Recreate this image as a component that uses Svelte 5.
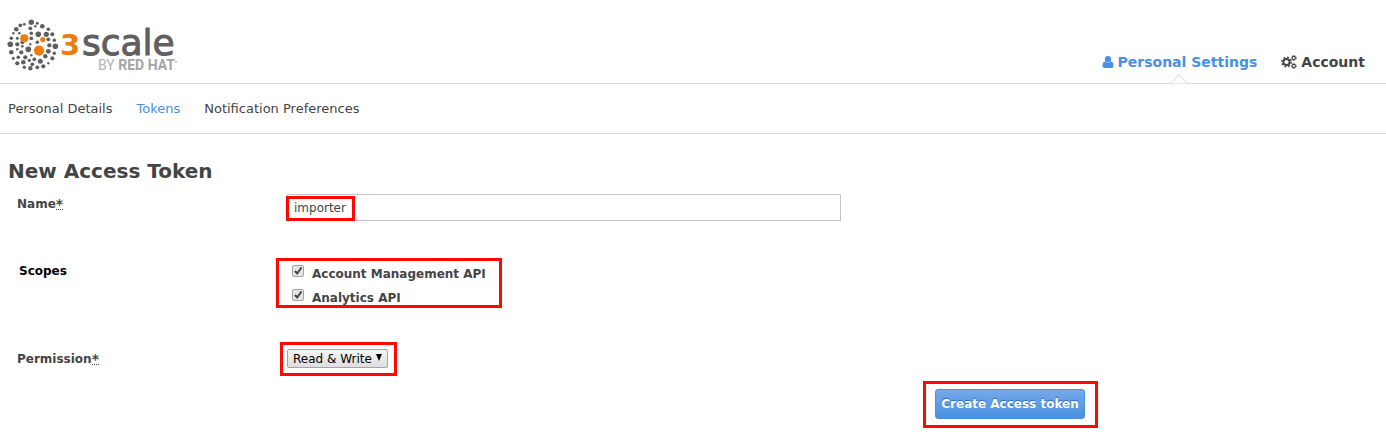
<script>
  const dots = [
    [31, 22, 2.7], [24, 24, 1.4], [37, 23, 1.5], [20, 25, 1.9], [42, 26, 2.3], [16, 29, 2.3], [30, 28, 1.9],
    [35, 26, 1.3], [48, 29, 1.8], [13, 33, 1.2], [19, 33, 1.3], [38, 34, 2.8], [46, 34, 2.6], [52, 34, 2],
    [31, 33, 1.8], [11, 38, 1.8], [17, 38, 1.5], [31, 38, 1.9], [54, 40, 1.7], [48, 39, 1.9], [10, 44, 2.8],
    [17, 44, 2.1], [22, 42, 1.9], [37, 42, 1.8], [30, 44, 1.2], [49, 45, 2.1], [55, 46, 2.8], [11, 52, 2.3],
    [22, 46, 1.4], [28, 49, 2.9], [17, 49, 1.3], [48, 51, 2.4], [54, 53, 1.7], [21, 52, 2.1], [31, 55, 1.2],
    [13, 58, 1.5], [18, 57, 1.8], [25, 57, 2.1], [34, 59, 1.9], [45, 56, 2.2], [52, 58, 2.1], [17, 63, 2.1],
    [23, 62, 2.3], [29, 60, 1.6], [32, 64, 1.9], [40, 61, 2.5], [48, 63, 1.2], [24, 67, 1.7], [30, 68, 2.2],
    [37, 67, 1.9], [43, 66, 2.1]
  ];
  const accents = [[24, 38, 4.1], [42.5, 39.3, 2.6], [38.7, 50.3, 5.1]];
  const sections = ['Personal Details', 'Tokens', 'Notification Preferences'];
  let name = $state('importer');
  let account = $state(true);
  let analytics = $state(true);
</script>

<header>
  <a class="brand" href="#home" aria-label="3scale by Red Hat">
    <svg width="184" height="74" viewBox="0 0 184 74">
      {#each dots as [x, y, r]}<circle cx={x + 0.3} cy={y + 0.3} {r} fill="#5f5f60" />{/each}
      {#each accents as [x, y, r]}<circle cx={x + 0.3} cy={y + 0.3} {r} fill="#ed7d0c" />{/each}
      <text class="three" x="60" y="55">3</text>
      <text class="scale" x="82" y="55">scale</text>
      <text class="by" x="98" y="70">BY <tspan>RED HAT</tspan></text>
      <circle cx="176" cy="62" r="1" fill="#bbb" />
    </svg>
  </a>
  <nav class="main" aria-label="Main">
    <a class="active" href="#personal">
      <svg width="12" height="14" viewBox="0 0 12 14"><path fill="currentColor" d="M6 1a3.2 3.2 0 1 1 0 6.4A3.2 3.2 0 0 1 6 1M3 6.6C4.700 8.400 7.300 8.400 9 6.600C11 6.800 11.500 9 11.500 11C11.500 12.300 10.700 13 9.600 13H2.400C1.300 13 .500 12.300 .500 11C.500 9 1 6.800 3 6.600Z" /></svg>
      Personal Settings
      <svg class="notch" width="18" height="10" viewBox="0 0 18 10"><path d="M0.500 9.500L9 1L17.500 9.500" fill="#fff" stroke="#d9d9d9" /></svg>
    </a>
    <a href="#account">
      <svg width="16" height="14" viewBox="0 0 16 14" fill="none" stroke="currentColor">
        <circle cx="5.500" cy="7" r="3.100" stroke-width="2" />
        <circle cx="5.500" cy="7" r="4.700" stroke-width="1.500" stroke-dasharray="1.850 1.840" />
        <circle cx="12.800" cy="3" r="1.600" stroke-width="1.100" />
        <circle cx="12.800" cy="3" r="2.500" stroke-dasharray="1 .960" />
        <circle cx="12.800" cy="11" r="1.600" stroke-width="1.100" />
        <circle cx="12.800" cy="11" r="2.500" stroke-dasharray="1 .960" />
      </svg>
      Account
    </a>
  </nav>
</header>

<nav class="sub" aria-label="Personal settings">
  {#each sections as section}
    <a class:active={section === 'Tokens'} href="#{section}">{section}</a>
  {/each}
</nav>

<main>
  <h1>New Access Token</h1>
  <form onsubmit={(e) => e.preventDefault()}>
    <div class="row name">
      <label for="name">Name<abbr title="required">*</abbr></label>
      <div class="field">
        <input id="name" type="text" bind:value={name} />
        <span class="mark"></span>
      </div>
    </div>
    <div class="row scopes" role="group" aria-labelledby="scopes">
      <span class="legend" id="scopes">Scopes</span>
      <div class="outline checks">
        <label><input type="checkbox" bind:checked={account} />Account Management API</label>
        <label><input type="checkbox" bind:checked={analytics} />Analytics API</label>
      </div>
    </div>
    <div class="row permission">
      <label for="permission">Permission<abbr title="required">*</abbr></label>
      <div class="outline choice">
        <select id="permission"><option>Read &amp; Write</option></select>
        <svg width="6" height="7" viewBox="0 0 6 7"><path d="M0 0H6L3 7Z" /></svg>
      </div>
    </div>
    <div class="actions">
      <div class="outline submit"><button type="submit">Create Access token</button></div>
    </div>
  </form>
</main>

<style>
  :global(body) {
    background: #fff;
    color: #444;
    font: 12px/20px "DejaVu Sans", Verdana, sans-serif;
  }
  :global(*) { box-sizing: border-box; }
  a { color: inherit; text-decoration: none; }
  svg { display: block; }
  header {
    display: flex;
    justify-content: space-between;
    align-items: flex-end;
    height: 84px;
    padding-right: 21px;
    border-bottom: 1px solid #d9d9d9;
  }
  .brand { align-self: flex-start; }
  .three { font: bold 29px "DejaVu Sans", sans-serif; fill: #ed7d0c; }
  .scale { font: 36px "DejaVu Sans", sans-serif; fill: #5f5f60; stroke: #5f5f60; stroke-width: 1px; }
  .by { font: 14px Roboto, sans-serif; fill: #b4b4b4; }
  .by tspan { font-weight: bold; fill: #a5a5a5; }
  .main { display: flex; gap: 24px; font-size: 14px; font-weight: bold; }
  .main a { position: relative; display: flex; align-items: center; gap: 4px; padding-bottom: 11px; }
  .active { color: #4a90e2; }
  .notch { position: absolute; left: calc(50% - 9px); bottom: -1px; }
  .sub {
    display: flex;
    gap: 24px;
    align-items: center;
    height: 50px;
    padding: 0 8px;
    border-bottom: 1px solid #d9d9d9;
    font-size: 13px;
  }
  main { padding: 25px 8px 0; }
  h1 { margin: 0; font-size: 20px; line-height: 24px; }
  .row { display: grid; grid-template-columns: 268px 1fr; align-items: start; padding-left: 9px; font-weight: bold; }
  abbr {
    display: inline-block;
    height: 13px;
    border-bottom: 1px dotted #444;
    font-size: 14px;
    line-height: 14px;
    text-decoration: none;
    vertical-align: top;
    margin-top: 3px;
  }
  .name { margin-top: 11px; }
  .field { position: relative; width: calc(50% + 7px); min-width: 240px; margin-left: 2px; }
  .field input {
    display: block;
    width: 100%;
    height: 27px;
    padding: 0 6px;
    border: 1px solid #c4c4c4;
    font: 12px "DejaVu Sans", sans-serif;
    color: #444;
  }
  .mark { position: absolute; left: -1px; top: 2px; width: 69px; height: 25px; border: 3px solid #ff0800; pointer-events: none; }
  .outline { border: 3px solid #ff0800; }
  .scopes { grid-template-columns: 259px 1fr; margin-top: 37px; }
  .legend { padding: 3px 2px; color: #000; }
  .checks { width: 226px; height: 50px; padding: 1px 13px 0; }
  .checks label { display: flex; align-items: center; gap: 8px; height: 24px; white-space: nowrap; }
  .checks input {
    appearance: none;
    width: 12px;
    height: 12px;
    margin: 0 0 6px;
    border: 1px solid #a4a4a4;
    border-radius: 2px;
    background: #e6e6e6;
  }
  .checks input:checked {
    background: url("data:image/svg+xml,%3Csvg xmlns='http://www.w3.org/2000/svg' viewBox='0 0 10 10'%3E%3Cpath d='M2 5L4.200 7.500L8.500 1.500' fill='none' stroke='%23444' stroke-width='2'/%3E%3C/svg%3E") #e6e6e6;
  }
  .permission { grid-template-columns: 263px 1fr; margin-top: 34px; }
  .permission > label { padding-top: 7px; }
  .choice { position: relative; width: 117px; height: 34px; padding: 4px; }
  .choice select {
    appearance: none;
    display: block;
    width: 101px;
    height: 19px;
    padding: 0 5px;
    border: 1px solid #a4a4a4;
    border-radius: 2px;
    background: linear-gradient(#f4f4f4, #dedede);
    color: #000;
    font: 12px "DejaVu Sans", sans-serif;
  }
  .choice svg { position: absolute; right: 12px; top: 9px; pointer-events: none; }
  .actions { display: flex; justify-content: flex-end; width: 80%; margin-top: 5px; padding-right: 6px; }
  .submit { padding: 5px 10px 6px 9px; }
  button {
    display: block;
    width: 150px;
    height: 30px;
    padding: 0;
    border: 1px solid #4a90e2;
    border-radius: 3px;
    background: linear-gradient(#75a9e9, #4a90e2);
    color: #fff;
    font: bold 12px "DejaVu Sans", sans-serif;
    text-shadow: 0 -1px 1px #2d6cb5;
  }
</style>
